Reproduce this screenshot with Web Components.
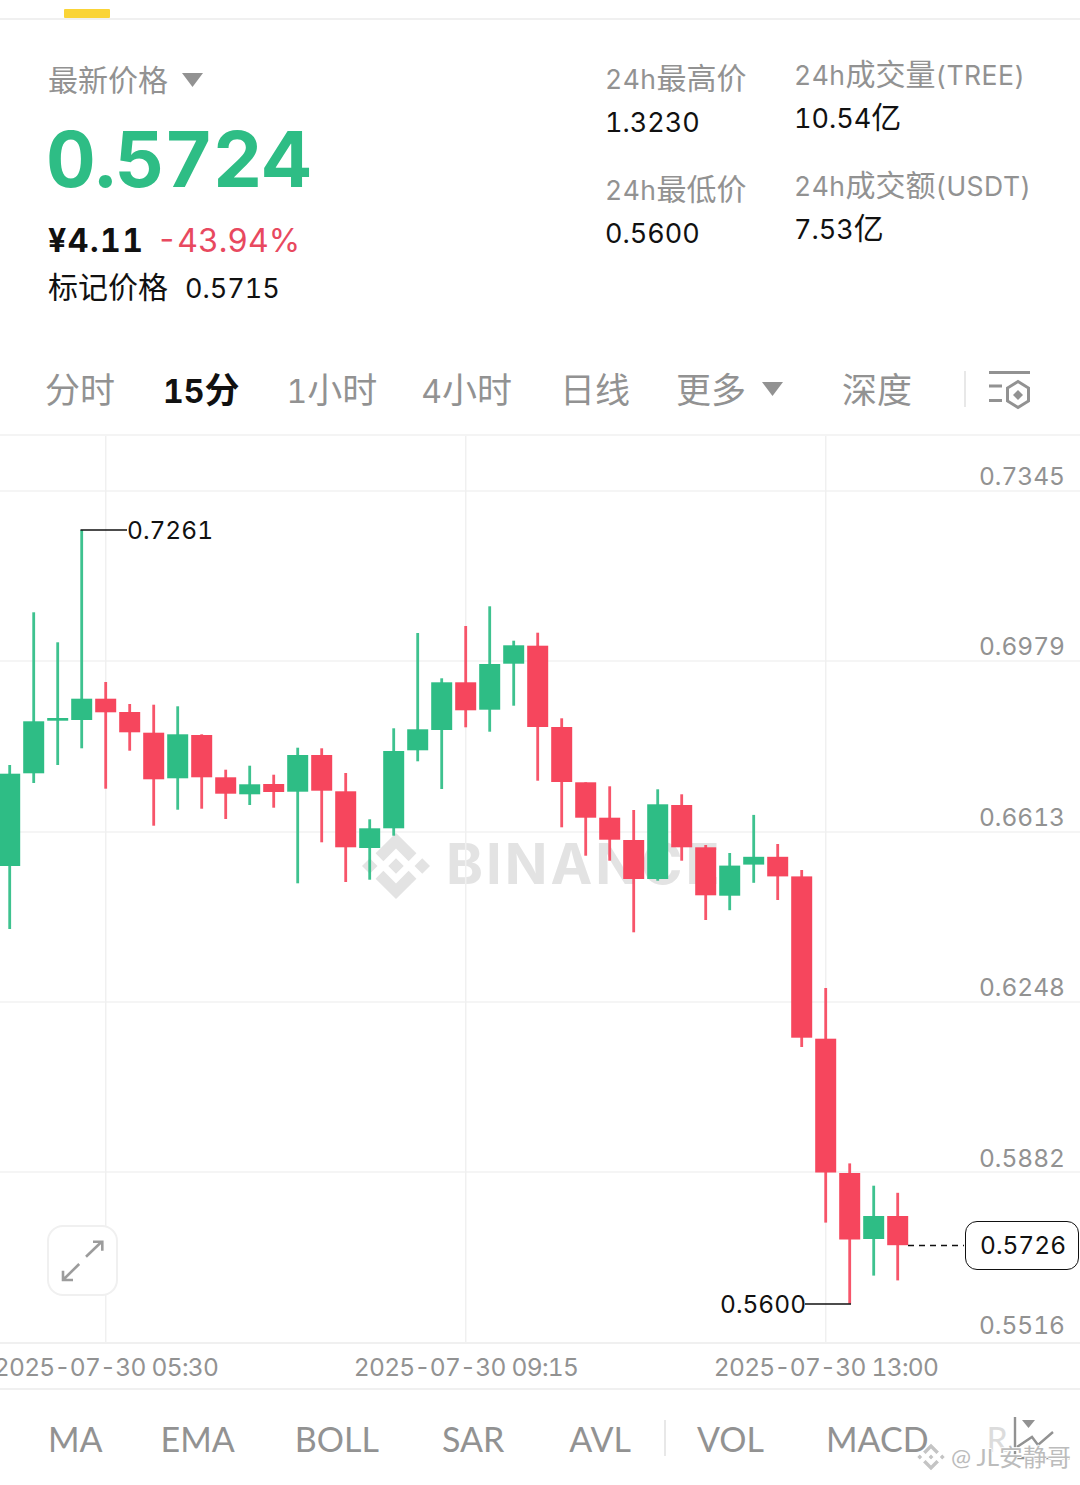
<!DOCTYPE html>
<html lang="zh-CN">
<head>
<meta charset="utf-8">
<title>TREE/USDT</title>
<style>
    html, body { margin: 0; background: #fff; }
    body {
        width: 1080px;
        height: 1485px;
        overflow: hidden;
        font-family: Inter, "Noto Sans CJK SC", sans-serif;
        font-variant-numeric: tabular-nums;
    }
</style>
</head>
<body>
<top-strip></top-strip>
<market-header></market-header>
<interval-tabs></interval-tabs>
<kline-chart></kline-chart>
<time-axis></time-axis>
<indicator-bar></indicator-bar>

<script>
const FONT = 'Inter, "Noto Sans CJK SC", sans-serif';
const LETTER_FONT = 'Lato, "Noto Sans CJK SC", sans-serif';
const GREEN = '#2ebd85';
const RED = '#f6465d';
const GREY = '#929292';
const CHART_TOP = 436;

const logoPaths = `
    <polygon points="0,-8 8,0 0,8 -8,0"/>
    <polygon points="-27,-8 -19,0 -27,8 -35,0"/>
    <polygon points="27,-8 35,0 27,8 19,0"/>
    <polygon points="0,-34 21,-13 13,-5 0,-18 -13,-5 -21,-13"/>
    <polygon points="0,34 21,13 13,5 0,18 -13,5 -21,13"/>
`;

// latin runs sit smaller than the CJK next to them
const latin = text => text.replace(/[A-Za-z0-9().]+/g, run => `<span class="num">${run}</span>`);

class TopStrip extends HTMLElement {
    constructor() {
        super();
        this.attachShadow({mode: 'open'});
        this.shadowRoot.innerHTML = `
            <style>
                :host {
                    display: block;
                    height: 9px;
                    padding-top: 9px;
                    border-bottom: 2px solid #f0f0f0;
                }
                div { width: 46px; height: 9px; margin-left: 64px; background: #fad437; border-radius: 1px; }
            </style>
            <div></div>
        `;
    }
}

class StatItem extends HTMLElement {
    constructor() {
        super();
        this.attachShadow({mode: 'open'});
        this.shadowRoot.innerHTML = `
            <style>
                :host { display: block; }
                .label { color: ${GREY}; font-size: 30px; line-height: 36px; white-space: nowrap; }
                .value { color: #111; font-size: 30px; line-height: 36px; margin-top: 6px; white-space: nowrap; }
                .label .num { font-size: 26.5px; letter-spacing: .5px; }
                .value .num { font-size: 27px; }
            </style>
            <div class="label">${latin(this.getAttribute('label'))}</div>
            <div class="value">${latin(this.getAttribute('value'))}</div>
        `;
    }
}
customElements.define('stat-item', StatItem);

class MarketHeader extends HTMLElement {
    constructor() {
        super();
        this.attachShadow({mode: 'open'});
        this.shadowRoot.innerHTML = `
            <style>
                :host {
                    display: flex;
                    height: 330px;
                    box-sizing: border-box;
                    padding-left: 48px;
                    font-family: ${FONT};
                }
                .left { width: 557px; padding-top: 41px; }
                .pick { display: flex; align-items: center; color: ${GREY}; font-size: 30px; line-height: 38px; }
                .pick svg { margin-left: 14px; }
                .price { color: ${GREEN}; font-size: 77px; line-height: 90px; font-weight: 700; margin: 15px 0 0 -2px; letter-spacing: -.8px; }
                .sub { display: flex; align-items: baseline; font-size: 32px; line-height: 42px; margin-top: 16px; }
                .cny { color: #111; font-weight: 700; letter-spacing: 1.5px; }
                .chg { color: #e8495f; margin-left: 12px; }
                .mark { color: #111; font-size: 30px; line-height: 38px; margin-top: 6px; white-space: nowrap; }
                .mark span { margin-left: 17px; font-size: 27px; }
                .col { display: flex; flex-direction: column; gap: 29.5px; }
                .c1 { width: 189px; padding-top: 40px; }
                .c2 { padding-top: 36px; }
            </style>
            <div class="left">
                <div class="pick">最新价格<svg width="21" height="14" viewBox="0 0 21 14"><path d="M0 0h21L10.5 14z" fill="${GREY}"/></svg></div>
                <div class="price">0.5724</div>
                <div class="sub"><span class="cny">¥4.11</span><span class="chg">-43.94%</span></div>
                <div class="mark">标记价格<span>0.5715</span></div>
            </div>
            <div class="col c1">
                <stat-item label="24h最高价" value="1.3230"></stat-item>
                <stat-item label="24h最低价" value="0.5600"></stat-item>
            </div>
            <div class="col c2">
                <stat-item label="24h成交量(TREE)" value="10.54亿"></stat-item>
                <stat-item label="24h成交额(USDT)" value="7.53亿"></stat-item>
            </div>
        `;
    }
}

class IntervalTabs extends HTMLElement {
    constructor() {
        super();
        this.attachShadow({mode: 'open'});
        this.shadowRoot.innerHTML = `
            <style>
                :host {
                    display: flex;
                    align-items: center;
                    height: 75px;
                    padding: 0 0 9px 45px;
                    border-bottom: 2px solid #f4f4f4;
                    color: ${GREY};
                    font-family: ${FONT};
                    font-size: 35px;
                    white-space: nowrap;
                }
                span { display: block; }
                .num { display: inline; font-size: 32px; }
                .active { color: #111; font-weight: 700; margin-left: 48px; }
                .more { display: flex; align-items: center; }
                .more svg { margin: 3px 0 0 16px; }
                .sep { width: 2px; height: 36px; background: #e8e8e8; margin-top: 3px; }
            </style>
            <span>分时</span>
            <span class="active">${latin('15分')}</span>
            <span style="margin-left:47px">${latin('1小时')}</span>
            <span style="margin-left:44px">${latin('4小时')}</span>
            <span style="margin-left:48px">日线</span>
            <span class="more" style="margin-left:46px">更多<svg width="21" height="14" viewBox="0 0 21 14"><path d="M0 0h21L10.5 14z" fill="${GREY}"/></svg></span>
            <span style="margin-left:59px">深度</span>
            <span class="sep" style="margin-left:52px"></span>
            <svg style="margin:5px 0 0 21px" width="44" height="42" viewBox="985 369 44 42" fill="none" stroke="${GREY}" stroke-width="3">
                <path d="M987 372.5h41M987 386h13M987 400.5h13"/>
                <path d="M1016 381.5l10.5 6.5v13l-10.5 6.5-10.5-6.5v-13z"/>
                <path d="M1016 390l5 5-5 5-5-5z" fill="${GREY}" stroke="none"/>
            </svg>
        `;
    }
}

class KlineChart extends HTMLElement {
    // [up, wick top, wick bottom, body top, body bottom], page y coordinates, 24px apart
    candles = [
        [1, 765, 929, 773.7, 866],
        [1, 612.3, 783, 721.3, 773.3],
        [1, 642.3, 765, 718, 720.7],
        [1, 530, 748.3, 698.7, 720],
        [0, 682, 788.7, 698.7, 712.3],
        [0, 704, 750.7, 712, 732.3],
        [0, 704.7, 825.7, 732.7, 779.3],
        [1, 706.3, 809.7, 734.3, 778.3],
        [0, 734.3, 808.7, 735, 777.3],
        [0, 769.7, 819, 777.3, 793.7],
        [1, 765.7, 805, 784.3, 794.3],
        [0, 774.7, 807.7, 784, 792],
        [1, 747.7, 883.3, 755, 791.7],
        [0, 748.3, 842.3, 755, 790.7],
        [0, 773, 882, 791.3, 847.3],
        [1, 819.3, 879.7, 828.3, 848],
        [1, 728.3, 835.7, 751, 828.3],
        [1, 633, 761.3, 729.3, 750.3],
        [1, 678.3, 789, 682.3, 730],
        [0, 626, 727.3, 682.3, 710.3],
        [1, 606.3, 731.7, 664, 709.7],
        [1, 640.7, 705.7, 645.3, 663.7],
        [0, 632.7, 780.7, 645.7, 727],
        [0, 718.3, 827.3, 727, 782],
        [0, 782.3, 855.7, 782.3, 817.7],
        [0, 786.3, 860.7, 817.7, 839.7],
        [0, 810, 932.3, 840, 879],
        [1, 789.3, 880.7, 804.3, 879],
        [0, 794.3, 860.7, 805, 847.3],
        [0, 845, 920, 847.3, 895.3],
        [1, 853, 910.2, 865.6, 895.7],
        [1, 814.9, 882.8, 856.8, 864.6],
        [0, 844, 900, 856.8, 876.4],
        [0, 870, 1047, 876.4, 1037.7],
        [0, 988, 1222.6, 1038.7, 1172.5],
        [0, 1163.4, 1303.7, 1173, 1239.5],
        [1, 1185.7, 1275.6, 1216, 1239],
        [0, 1192.8, 1280.4, 1216, 1245.2]
    ];
    axis = [['0.7345', 476], ['0.6979', 646], ['0.6613', 817], ['0.6248', 987], ['0.5882', 1158], ['0.5516', 1325]];

    constructor() {
        super();
        this.attachShadow({mode: 'open'});
        this.render();
    }

    renderCandles() {
        return this.candles.map(([up, wt, wb, bt, bb], i) => {
            const x = 9.7 + 24 * i;
            const color = up ? GREEN : RED;
            return `<rect x="${x - 1.4}" y="${wt}" width="2.8" height="${wb - wt}" fill="${color}" opacity=".92"/>`
                + `<rect x="${x - 10.5}" y="${bt}" width="21" height="${bb - bt}" fill="${color}"/>`;
        }).join('');
    }

    render() {
        const lines = [491, 661, 832, 1002, 1172]
            .map(y => `<path d="M0 ${y}H1080" stroke="#f2f2f2" stroke-width="1.5"/>`).join('');
        const cols = [105.7, 465.7, 825.7]
            .map(x => `<path d="M${x} 435V1343" stroke="#f0f0f0" stroke-width="1.5"/>`).join('');
        const labels = this.axis
            .map(([text, y]) => `<span class="axis" style="top:${y - CHART_TOP - 18}px">${text}</span>`).join('');

        this.shadowRoot.innerHTML = `
            <style>
                :host {
                    display: block;
                    position: relative;
                    height: 906px;
                    overflow: hidden;
                    border-bottom: 2px solid #f0f0f0;
                    font-family: ${FONT};
                    font-size: 24.5px;
                }
                svg.plot { position: absolute; left: 0; top: 0; }
                span { position: absolute; line-height: 36px; white-space: nowrap; }
                .axis { right: 15px; color: ${GREY}; }
                .flag { color: #111; }
                .mark { left: 360px; top: 395px; width: 72px; height: 70px; }
                .wm {
                    left: 446px; top: 394px; width: 271px; height: 68px; overflow: hidden;
                    color: #e3e3e3; font-family: Inter, "Liberation Sans", sans-serif;
                    font-size: 56px; font-weight: 700; line-height: 68px; letter-spacing: 3px;
                }
                .pill {
                    left: 965px; top: ${1221 - CHART_TOP}px; width: 114px; height: 49px; box-sizing: border-box;
                    border: 1.5px solid #111; border-radius: 12px; background: #fff; color: #111;
                    line-height: 47px; padding-left: 14px;
                }
                .expand {
                    position: absolute; left: 47px; top: ${1225 - CHART_TOP}px; width: 71px; height: 71px; box-sizing: border-box;
                    border: 2px solid #f0f0f0; border-radius: 16px; background: #fff;
                }
            </style>
            <svg class="mark" style="position:absolute" viewBox="-36 -36 72 72" fill="#e3e3e3">${logoPaths}</svg>
            <span class="wm">BINANCE</span>
            <svg class="plot" width="1080" height="906" viewBox="0 ${CHART_TOP} 1080 906">
                ${lines}${cols}
                ${this.renderCandles()}
                <path d="M80.5 530H127" stroke="#111" stroke-width="1.5" fill="none"/>
                <path d="M805 1304H851" stroke="#111" stroke-width="1.5" fill="none"/>
                <path d="M908 1245.5H964" stroke="#111" stroke-width="1.5" stroke-dasharray="6 5" fill="none"/>
            </svg>
            ${labels}
            <span class="flag" style="left:127px;top:${530 - CHART_TOP - 18}px">0.7261</span>
            <span class="flag" style="left:720px;top:${1304 - CHART_TOP - 18}px">0.5600</span>
            <span class="pill">0.5726</span>
            <div class="expand">
                <svg width="67" height="67" viewBox="49 1227 67 67" fill="none" stroke="#9c9c9c" stroke-width="2.6">
                    <path d="M86 1256.7L101.6 1241.7M93 1241.7h9.3v9"/>
                    <path d="M79.2 1264L63.7 1279.3M63 1270.7v9.3h10"/>
                </svg>
            </div>
        `;
    }
}

class TimeAxis extends HTMLElement {
    constructor() {
        super();
        this.attachShadow({mode: 'open'});
        this.shadowRoot.innerHTML = `
            <style>
                :host {
                    display: grid;
                    grid-template-columns: repeat(3, 360px);
                    height: 44px;
                    margin-left: -74px;
                    border-bottom: 2px solid #f0f0f0;
                    color: ${GREY};
                    font-family: ${FONT};
                    font-size: 24.5px;
                    letter-spacing: -.7px;
                    line-height: 46px;
                    text-align: center;
                    white-space: nowrap;
                }
            </style>
            <span>2025-07-30 05:30</span>
            <span>2025-07-30 09:15</span>
            <span>2025-07-30 13:00</span>
        `;
    }
}

class IndicatorBar extends HTMLElement {
    constructor() {
        super();
        this.attachShadow({mode: 'open'});
        this.shadowRoot.innerHTML = `
            <style>
                :host {
                    display: flex;
                    position: relative;
                    align-items: center;
                    height: 95px;
                    padding: 1px 0 0 48px;
                    box-sizing: border-box;
                    color: ${GREY};
                    font-family: ${LETTER_FONT};
                    font-size: 34px;
                    white-space: nowrap;
                }
                .sep { width: 2px; height: 36px; background: #e8e8e8; }
                .fade { color: #dcdcdc; }
                .icon { position: absolute; left: 1010px; top: 23px; }
                .stamp {
                    position: absolute; left: 916px; top: 49px; display: flex; align-items: center; gap: 5px;
                    color: #bcbcbc; font-size: 24px; line-height: 36px;
                    text-shadow: 1px 0 #fff, -1px 0 #fff, 0 1px #fff, 0 -1px #fff;
                }
            </style>
            <span>MA</span>
            <span style="margin-left:58px">EMA</span>
            <span style="margin-left:60px">BOLL</span>
            <span style="margin-left:63px">SAR</span>
            <span style="margin-left:65px">AVL</span>
            <span class="sep" style="margin-left:33px"></span>
            <span style="margin-left:31px">VOL</span>
            <span style="margin-left:62px">MACD</span>
            <span class="fade" style="margin-left:58px">R</span>
            <svg class="icon" width="62" height="48" viewBox="1010 1413 62 48" fill="none" stroke="${GREY}" stroke-width="2.4">
                <path d="M1015 1417v41h55"/>
                <path d="M1022 1420h13l-6.5 8z" fill="${GREY}" stroke="none"/>
                <path d="M1017 1447l15-10 6 8 15-13"/>
            </svg>
            <div class="stamp">
                <svg width="30" height="30" viewBox="-36 -36 72 72" fill="#c4c4c4" stroke="#fff" stroke-width="3">${logoPaths}</svg>
                <span>@ JL安静哥</span>
            </div>
        `;
    }
}

customElements.define('top-strip', TopStrip);
customElements.define('market-header', MarketHeader);
customElements.define('interval-tabs', IntervalTabs);
customElements.define('kline-chart', KlineChart);
customElements.define('time-axis', TimeAxis);
customElements.define('indicator-bar', IndicatorBar);
</script>
</body>
</html>
